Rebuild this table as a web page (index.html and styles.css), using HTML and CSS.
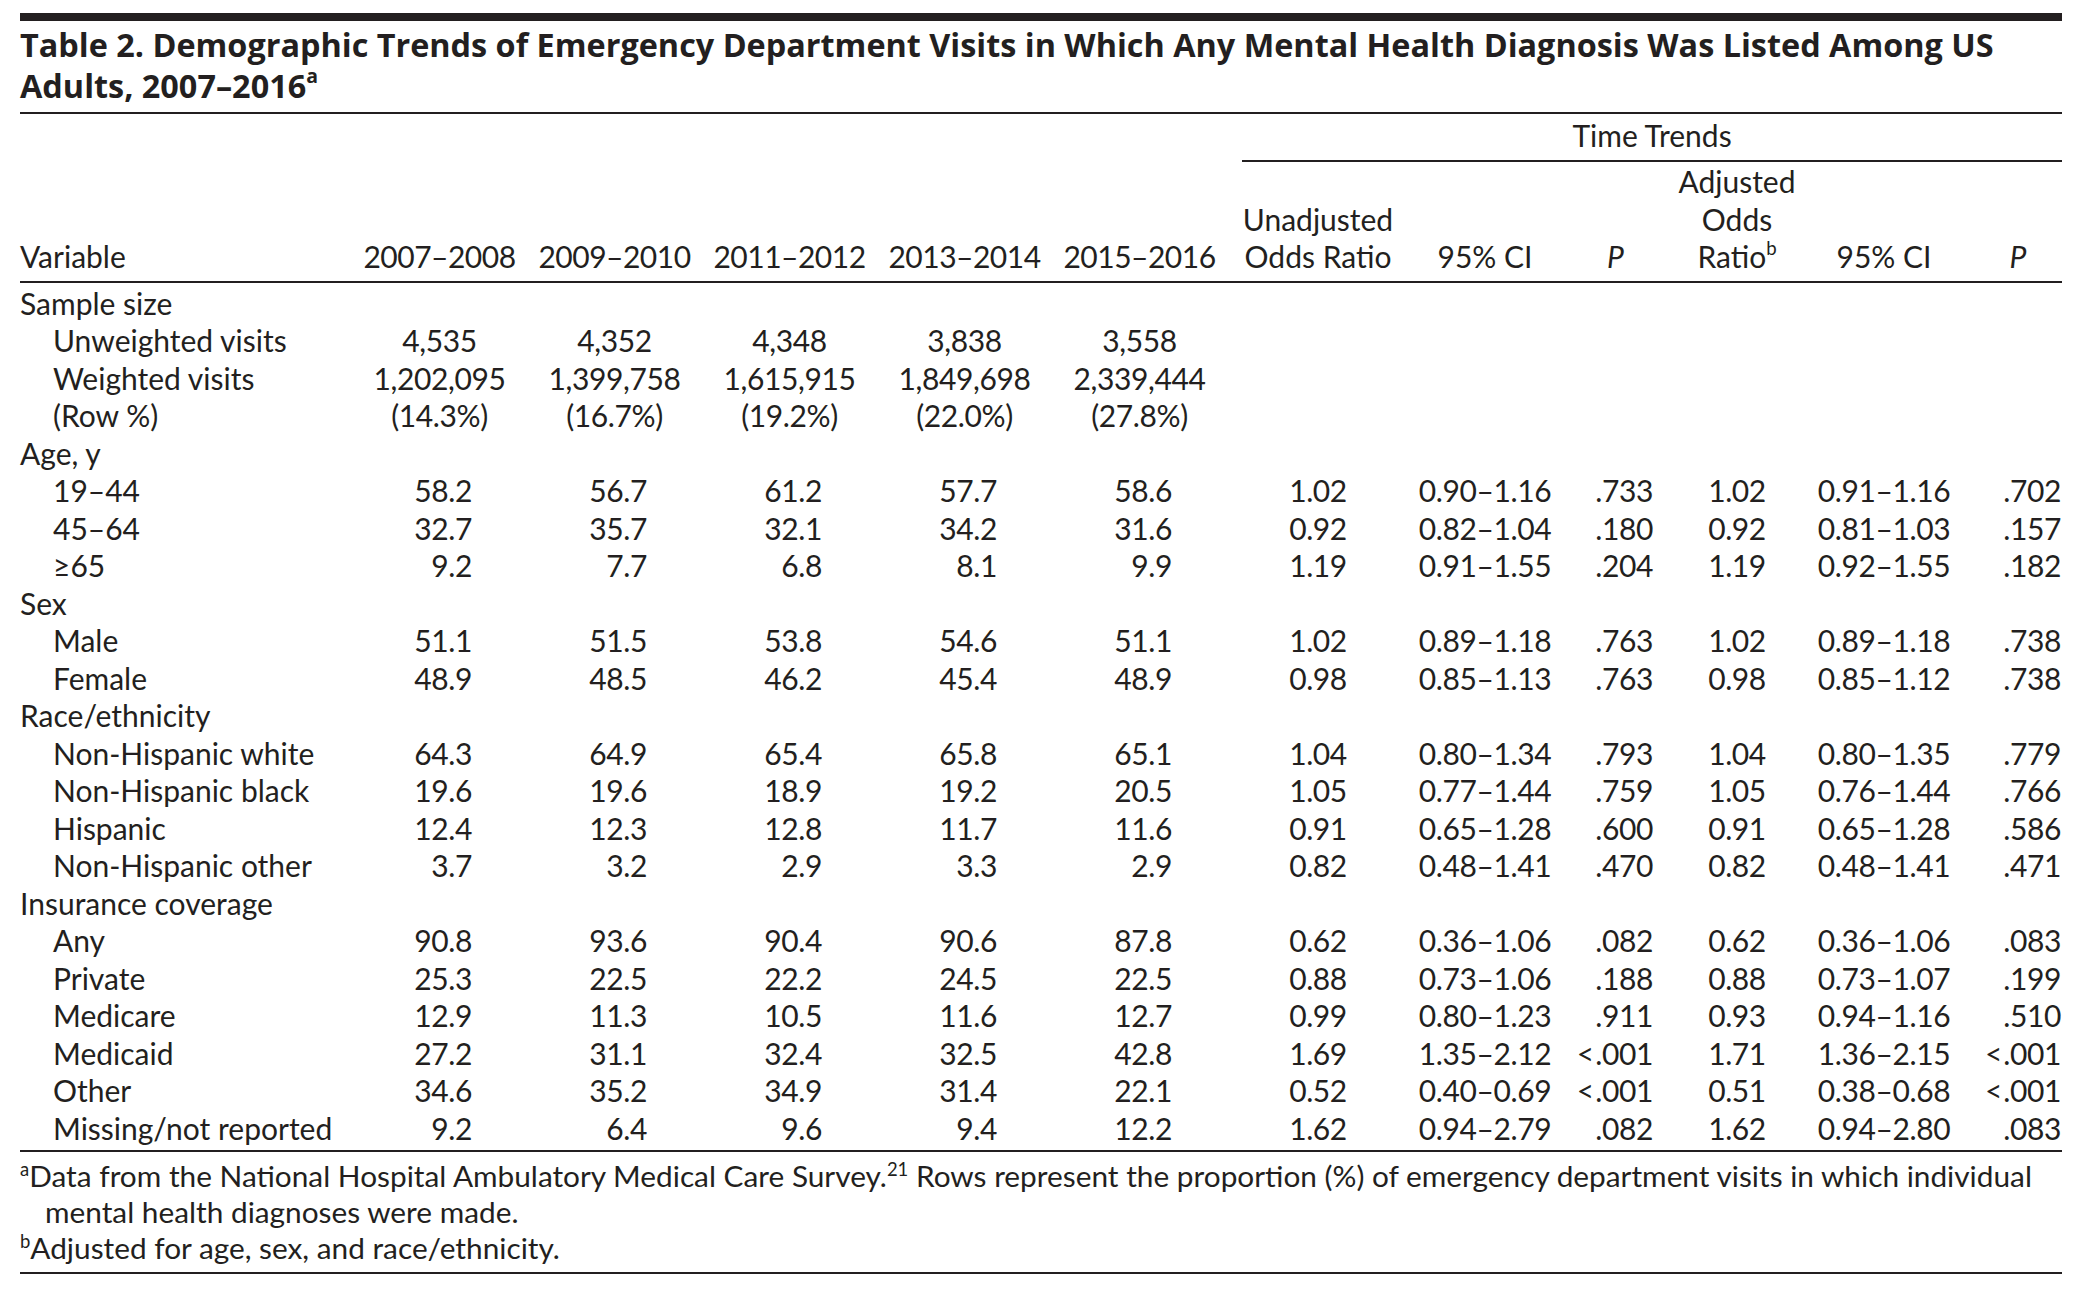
FILE: index.html
```html
<!DOCTYPE html>
<html lang="en">
<head>
<meta charset="utf-8">
<title>Table 2</title>
<link rel="stylesheet" href="styles.css">
</head>
<body>
<div class="page">
  <div class="topbar"></div>
  <h1 class="title">Table 2. Demographic Trends of Emergency Department Visits in Which Any Mental Health Diagnosis Was Listed Among US Adults, 2007–2016<sup>a</sup></h1>
  <table class="data">
    <colgroup>
      <col class="c-var"><col class="c-yr"><col class="c-yr"><col class="c-yr"><col class="c-yr"><col class="c-yr5">
      <col class="c-uor"><col class="c-ci1"><col class="c-p1"><col class="c-aor"><col class="c-ci2"><col class="c-p2">
    </colgroup>
    <thead>
      <tr class="h1row">
        <th colspan="6"></th>
        <th colspan="6" class="tt">Time Trends</th>
      </tr>
      <tr class="h2row">
        <th class="lft">Variable</th>
        <th class="yr">2007–2008</th>
        <th class="yr">2009–2010</th>
        <th class="yr">2011–2012</th>
        <th class="yr">2013–2014</th>
        <th class="yr">2015–2016</th>
        <th>Unadjusted<br>Odds Ratio</th>
        <th>95% CI</th>
        <th><i>P</i></th>
        <th>Adjusted<br>Odds<br>Ratio<sup>b</sup></th>
        <th>95% CI</th>
        <th class="hp2"><i>P</i></th>
      </tr>
    </thead>
    <tbody>
      <tr class="first"><td class="cat" colspan="12">Sample size</td></tr>
      <tr><td class="sub">Unweighted visits</td><td class="ctr">4,535</td><td class="ctr">4,352</td><td class="ctr">4,348</td><td class="ctr">3,838</td><td class="ctr">3,558</td><td colspan="6"></td></tr>
      <tr><td class="sub">Weighted visits</td><td class="ctr">1,202,095</td><td class="ctr">1,399,758</td><td class="ctr">1,615,915</td><td class="ctr">1,849,698</td><td class="ctr">2,339,444</td><td colspan="6"></td></tr>
      <tr><td class="sub">(Row %)</td><td class="ctr">(14.3%)</td><td class="ctr">(16.7%)</td><td class="ctr">(19.2%)</td><td class="ctr">(22.0%)</td><td class="ctr">(27.8%)</td><td colspan="6"></td></tr>

      <tr><td class="cat" colspan="12">Age, y</td></tr>
      <tr><td class="sub">19–44</td><td class="num">58.2</td><td class="num">56.7</td><td class="num">61.2</td><td class="num">57.7</td><td class="num">58.6</td><td class="ctr">1.02</td><td class="ctr">0.90–1.16</td><td class="p1">.733</td><td class="ctr">1.02</td><td class="ctr">0.91–1.16</td><td class="p2">.702</td></tr>
      <tr><td class="sub">45–64</td><td class="num">32.7</td><td class="num">35.7</td><td class="num">32.1</td><td class="num">34.2</td><td class="num">31.6</td><td class="ctr">0.92</td><td class="ctr">0.82–1.04</td><td class="p1">.180</td><td class="ctr">0.92</td><td class="ctr">0.81–1.03</td><td class="p2">.157</td></tr>
      <tr><td class="sub">≥65</td><td class="num">9.2</td><td class="num">7.7</td><td class="num">6.8</td><td class="num">8.1</td><td class="num">9.9</td><td class="ctr">1.19</td><td class="ctr">0.91–1.55</td><td class="p1">.204</td><td class="ctr">1.19</td><td class="ctr">0.92–1.55</td><td class="p2">.182</td></tr>

      <tr><td class="cat" colspan="12">Sex</td></tr>
      <tr><td class="sub">Male</td><td class="num">51.1</td><td class="num">51.5</td><td class="num">53.8</td><td class="num">54.6</td><td class="num">51.1</td><td class="ctr">1.02</td><td class="ctr">0.89–1.18</td><td class="p1">.763</td><td class="ctr">1.02</td><td class="ctr">0.89–1.18</td><td class="p2">.738</td></tr>
      <tr><td class="sub">Female</td><td class="num">48.9</td><td class="num">48.5</td><td class="num">46.2</td><td class="num">45.4</td><td class="num">48.9</td><td class="ctr">0.98</td><td class="ctr">0.85–1.13</td><td class="p1">.763</td><td class="ctr">0.98</td><td class="ctr">0.85–1.12</td><td class="p2">.738</td></tr>

      <tr><td class="cat" colspan="12">Race/ethnicity</td></tr>
      <tr><td class="sub">Non-Hispanic white</td><td class="num">64.3</td><td class="num">64.9</td><td class="num">65.4</td><td class="num">65.8</td><td class="num">65.1</td><td class="ctr">1.04</td><td class="ctr">0.80–1.34</td><td class="p1">.793</td><td class="ctr">1.04</td><td class="ctr">0.80–1.35</td><td class="p2">.779</td></tr>
      <tr><td class="sub">Non-Hispanic black</td><td class="num">19.6</td><td class="num">19.6</td><td class="num">18.9</td><td class="num">19.2</td><td class="num">20.5</td><td class="ctr">1.05</td><td class="ctr">0.77–1.44</td><td class="p1">.759</td><td class="ctr">1.05</td><td class="ctr">0.76–1.44</td><td class="p2">.766</td></tr>
      <tr><td class="sub">Hispanic</td><td class="num">12.4</td><td class="num">12.3</td><td class="num">12.8</td><td class="num">11.7</td><td class="num">11.6</td><td class="ctr">0.91</td><td class="ctr">0.65–1.28</td><td class="p1">.600</td><td class="ctr">0.91</td><td class="ctr">0.65–1.28</td><td class="p2">.586</td></tr>
      <tr><td class="sub">Non-Hispanic other</td><td class="num">3.7</td><td class="num">3.2</td><td class="num">2.9</td><td class="num">3.3</td><td class="num">2.9</td><td class="ctr">0.82</td><td class="ctr">0.48–1.41</td><td class="p1">.470</td><td class="ctr">0.82</td><td class="ctr">0.48–1.41</td><td class="p2">.471</td></tr>

      <tr><td class="cat" colspan="12">Insurance coverage</td></tr>
      <tr><td class="sub">Any</td><td class="num">90.8</td><td class="num">93.6</td><td class="num">90.4</td><td class="num">90.6</td><td class="num">87.8</td><td class="ctr">0.62</td><td class="ctr">0.36–1.06</td><td class="p1">.082</td><td class="ctr">0.62</td><td class="ctr">0.36–1.06</td><td class="p2">.083</td></tr>
      <tr><td class="sub">Private</td><td class="num">25.3</td><td class="num">22.5</td><td class="num">22.2</td><td class="num">24.5</td><td class="num">22.5</td><td class="ctr">0.88</td><td class="ctr">0.73–1.06</td><td class="p1">.188</td><td class="ctr">0.88</td><td class="ctr">0.73–1.07</td><td class="p2">.199</td></tr>
      <tr><td class="sub">Medicare</td><td class="num">12.9</td><td class="num">11.3</td><td class="num">10.5</td><td class="num">11.6</td><td class="num">12.7</td><td class="ctr">0.99</td><td class="ctr">0.80–1.23</td><td class="p1">.911</td><td class="ctr">0.93</td><td class="ctr">0.94–1.16</td><td class="p2">.510</td></tr>
      <tr><td class="sub">Medicaid</td><td class="num">27.2</td><td class="num">31.1</td><td class="num">32.4</td><td class="num">32.5</td><td class="num">42.8</td><td class="ctr">1.69</td><td class="ctr">1.35–2.12</td><td class="p1">&lt;&#8202;.001</td><td class="ctr">1.71</td><td class="ctr">1.36–2.15</td><td class="p2">&lt;&#8202;.001</td></tr>
      <tr><td class="sub">Other</td><td class="num">34.6</td><td class="num">35.2</td><td class="num">34.9</td><td class="num">31.4</td><td class="num">22.1</td><td class="ctr">0.52</td><td class="ctr">0.40–0.69</td><td class="p1">&lt;&#8202;.001</td><td class="ctr">0.51</td><td class="ctr">0.38–0.68</td><td class="p2">&lt;&#8202;.001</td></tr>
      <tr class="last"><td class="sub">Missing/not reported</td><td class="num">9.2</td><td class="num">6.4</td><td class="num">9.6</td><td class="num">9.4</td><td class="num">12.2</td><td class="ctr">1.62</td><td class="ctr">0.94–2.79</td><td class="p1">.082</td><td class="ctr">1.62</td><td class="ctr">0.94–2.80</td><td class="p2">.083</td></tr>
    </tbody>
  </table>
  <div class="notes">
    <p class="note"><sup>a</sup>Data from the National Hospital Ambulatory Medical Care Survey.<sup>21</sup> Rows represent the proportion (%) of emergency department visits in which individual mental health diagnoses were made.</p>
    <p class="note"><sup>b</sup>Adjusted for age, sex, and race/ethnicity.</p>
  </div>
</div>
</body>
</html>
```
FILE: styles.css
```css
html, body {
  margin: 0;
  padding: 0;
  background: #ffffff;
}

.page {
  width: 2042px;
  padding: 13px 0 0 20px;
  color: #231f20;
  font-family: "Lato", "Liberation Sans", sans-serif;
  font-size: 30px;
}

.topbar {
  height: 8px;
  background: #231f20;
}

.title {
  margin: 0;
  padding: 3px 0 6px 0;
  border-bottom: 2px solid #231f20;
  font-family: "Open Sans", "Liberation Sans", sans-serif;
  font-weight: 700;
  font-size: 32.4px;
  line-height: 41px;
}

.title sup {
  font-size: 0.6em;
  line-height: 0;
  vertical-align: 0.75em;
}

.data {
  width: 2042px;
  table-layout: fixed;
  border-collapse: separate;
  border-spacing: 0;
  font-variant-numeric: tabular-nums lining-nums;
}

.c-var { width: 332px; }
.c-yr { width: 175px; }
.c-yr5 { width: 190px; }
.c-uor { width: 167px; }
.c-ci1 { width: 152px; }
.c-p1 { width: 109px; }
.c-aor { width: 134px; }
.c-ci2 { width: 160px; }
.c-p2 { width: 98px; }

.data th,
.data td {
  padding: 0;
  font-weight: 400;
  line-height: 37.5px;
  white-space: nowrap;
}

.h1row th {
  padding: 3px 0 5px 0;
}

.h1row .tt {
  text-align: center;
  border-bottom: 2px solid #231f20;
}

.h2row th {
  padding: 1.5px 0 5.5px 0;
  text-align: center;
  vertical-align: bottom;
  border-bottom: 2px solid #231f20;
}

.h2row th.lft {
  text-align: left;
}

.h2row th.yr {
  letter-spacing: -0.5px;
}

.h2row th.hp2 {
  padding-left: 10px;
}

/* 2015–2016 column is 15px wider; keep its content centred like its siblings */
.h2row th:nth-child(6),
.data tbody td:nth-child(6) {
  padding-right: 15px;
}

/* unadjusted odds ratio column: content centred on its visual axis */
.h2row th:nth-child(7),
.data tbody td.ctr:nth-child(7) {
  padding-right: 15px;
}

.h2row sup {
  font-size: 0.62em;
  line-height: 0;
  vertical-align: 0.7em;
}

.data tbody tr.first td {
  padding-top: 1.6px;
}

.data tbody tr.last td {
  padding-bottom: 3px;
  border-bottom: 2px solid #231f20;
}

.data td.cat {
  text-align: left;
  padding-left: 0;
}

.data td.sub {
  text-align: left;
  padding-left: 33px;
}

.data td.num,
.data td.ctr,
.data td.p1,
.data td.p2 {
  letter-spacing: -0.4px;
}

.data td.num {
  text-align: right;
  padding-right: 55px;
}

.data td.num:nth-child(6) {
  padding-right: 70px;
}

.data td.ctr {
  text-align: center;
}

.data td.p1 {
  text-align: right;
  padding-right: 17px;
}

.data td.p2 {
  text-align: right;
  padding-right: 1px;
}

.notes {
  padding: 6px 0 6px 0;
  border-bottom: 2px solid #231f20;
}

.note {
  margin: 0;
  padding-left: 25px;
  text-indent: -25px;
  font-size: 29.8px;
  line-height: 36px;
}

.note sup {
  font-size: 0.62em;
  line-height: 0;
  vertical-align: 0.62em;
}
```
